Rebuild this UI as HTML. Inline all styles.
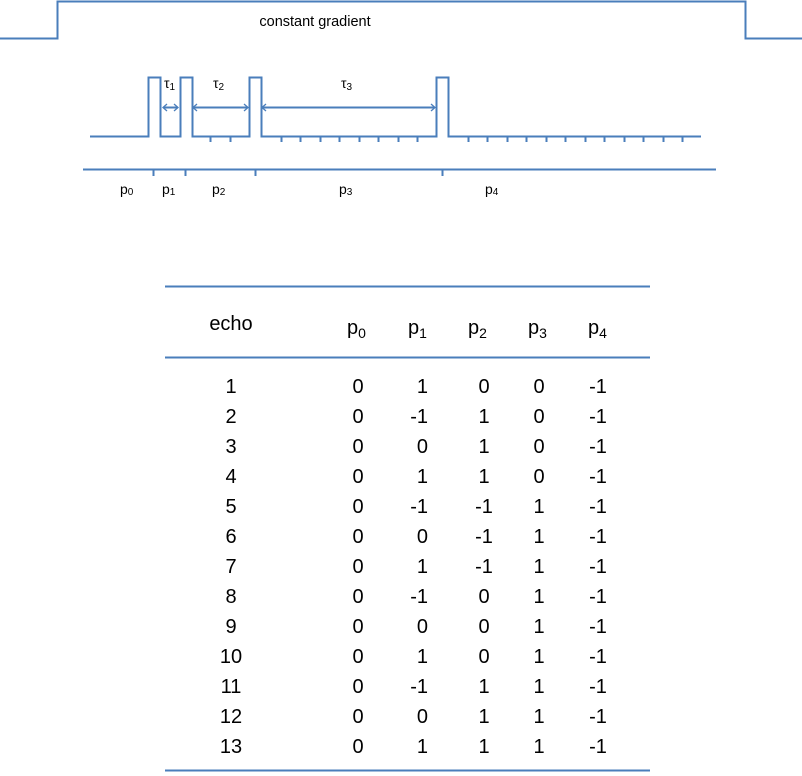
<!DOCTYPE html>
<html><head><meta charset="utf-8"><style>
html,body{margin:0;padding:0;background:#fff;width:802px;height:776px;overflow:hidden}
svg{display:block}
text{font-family:"Liberation Sans",sans-serif;fill:#000}
</style></head><body>
<svg width="802" height="776" viewBox="0 0 802 776" xmlns="http://www.w3.org/2000/svg">
<g fill="none" stroke="#4a7ebb" stroke-width="2">
<path d="M0 38.5H57.5V1.5H745.5V38.5H802"/>
<path d="M90 136.5H148.5V77.5H160.5V136.5H180.5V77.5H192.5V136.5H249.5V77.5H261.5V136.5H436.5V77.5H448.5V136.5H701"/>
<path d="M210.5 137V142M230.5 137V142M281.5 137V142M300.5 137V142M320.5 137V142M339.5 137V142M359.5 137V142M378.5 137V142M398.5 137V142M417.5 137V142M468.5 137V142M487.5 137V142M507.5 137V142M526.5 137V142M546.5 137V142M565.5 137V142M585.5 137V142M604.5 137V142M624.5 137V142M643.5 137V142M663.5 137V142M682.5 137V142"/>
<path d="M83 169.5H716M153.5 169V176M185.5 169V176M255.5 169V176M442.5 169V176"/>
<path d="M163 107.5H178M193 107.5H248M262 107.5H435"/>
<path d="M167 104L163 107.5L167 111M174 104L178 107.5L174 111M197 104L193 107.5L197 111M244 104L248 107.5L244 111M266 104L262 107.5L266 111M431 104L435 107.5L431 111" stroke-width="1.3"/>
<path d="M165 286.5H650M165 357.5H650M165 770.5H650"/>
</g>
<text x="315" y="26" font-size="14.5" text-anchor="middle">constant gradient</text>
<g font-size="14">
<text x="164" y="88">τ<tspan font-size="10" dy="2">1</tspan></text>
<text x="213" y="88">τ<tspan font-size="10" dy="2">2</tspan></text>
<text x="341" y="88">τ<tspan font-size="10" dy="2">3</tspan></text>
<text x="120" y="194">p<tspan font-size="10" dy="1">0</tspan></text>
<text x="162" y="194">p<tspan font-size="10" dy="1">1</tspan></text>
<text x="212" y="194">p<tspan font-size="10" dy="1">2</tspan></text>
<text x="339" y="194">p<tspan font-size="10" dy="1">3</tspan></text>
<text x="485" y="194">p<tspan font-size="10" dy="1">4</tspan></text>
</g>
<g font-size="20">
<text x="231" y="330" text-anchor="middle">echo</text>
<text x="347" y="334">p<tspan font-size="14" dy="4">0</tspan></text>
<text x="408" y="334">p<tspan font-size="14" dy="4">1</tspan></text>
<text x="468" y="334">p<tspan font-size="14" dy="4">2</tspan></text>
<text x="528" y="334">p<tspan font-size="14" dy="4">3</tspan></text>
<text x="588" y="334">p<tspan font-size="14" dy="4">4</tspan></text>
</g>
<g font-size="20" text-anchor="middle">
<g transform="translate(0,393)"><text x="231">1</text><text x="358">0</text><text x="428" text-anchor="end">1</text><text x="484">0</text><text x="539">0</text><text x="598">-1</text></g>
<g transform="translate(0,423)"><text x="231">2</text><text x="358">0</text><text x="428" text-anchor="end">-1</text><text x="484">1</text><text x="539">0</text><text x="598">-1</text></g>
<g transform="translate(0,453)"><text x="231">3</text><text x="358">0</text><text x="428" text-anchor="end">0</text><text x="484">1</text><text x="539">0</text><text x="598">-1</text></g>
<g transform="translate(0,483)"><text x="231">4</text><text x="358">0</text><text x="428" text-anchor="end">1</text><text x="484">1</text><text x="539">0</text><text x="598">-1</text></g>
<g transform="translate(0,513)"><text x="231">5</text><text x="358">0</text><text x="428" text-anchor="end">-1</text><text x="484">-1</text><text x="539">1</text><text x="598">-1</text></g>
<g transform="translate(0,543)"><text x="231">6</text><text x="358">0</text><text x="428" text-anchor="end">0</text><text x="484">-1</text><text x="539">1</text><text x="598">-1</text></g>
<g transform="translate(0,573)"><text x="231">7</text><text x="358">0</text><text x="428" text-anchor="end">1</text><text x="484">-1</text><text x="539">1</text><text x="598">-1</text></g>
<g transform="translate(0,603)"><text x="231">8</text><text x="358">0</text><text x="428" text-anchor="end">-1</text><text x="484">0</text><text x="539">1</text><text x="598">-1</text></g>
<g transform="translate(0,633)"><text x="231">9</text><text x="358">0</text><text x="428" text-anchor="end">0</text><text x="484">0</text><text x="539">1</text><text x="598">-1</text></g>
<g transform="translate(0,663)"><text x="231">10</text><text x="358">0</text><text x="428" text-anchor="end">1</text><text x="484">0</text><text x="539">1</text><text x="598">-1</text></g>
<g transform="translate(0,693)"><text x="231">11</text><text x="358">0</text><text x="428" text-anchor="end">-1</text><text x="484">1</text><text x="539">1</text><text x="598">-1</text></g>
<g transform="translate(0,723)"><text x="231">12</text><text x="358">0</text><text x="428" text-anchor="end">0</text><text x="484">1</text><text x="539">1</text><text x="598">-1</text></g>
<g transform="translate(0,753)"><text x="231">13</text><text x="358">0</text><text x="428" text-anchor="end">1</text><text x="484">1</text><text x="539">1</text><text x="598">-1</text></g>
</g>
</svg>
</body></html>
